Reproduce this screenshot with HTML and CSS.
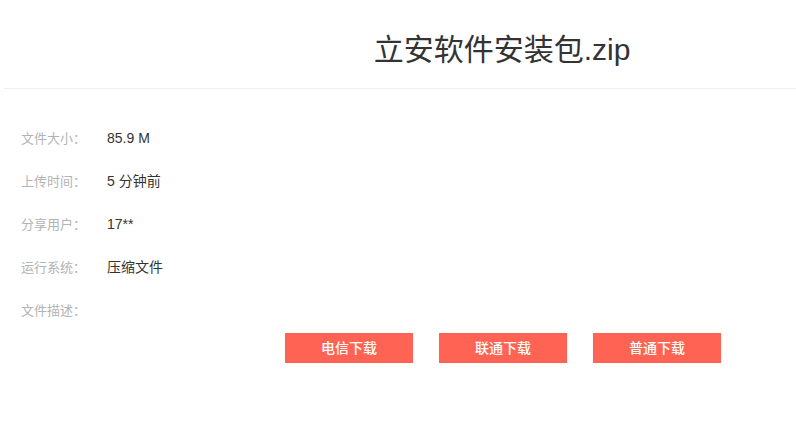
FILE: index.html
```html
<!DOCTYPE html>
<html>
<head>
  <meta charset="UTF-8" />
  <title>立安软件安装包.zip</title>
  <link rel="stylesheet" href="styles.css">
</head>
<body>
  <div class="page">
    <!-- File name -->
    <div class="head">
      <h1 class="title">立安软件安装包.zip</h1>
    </div>

    <!-- File info list -->
    <ul class="info">
      <li class="row"><span class="label">文件大小：</span><span class="value">85.9 M</span></li>
      <li class="row"><span class="label">上传时间：</span><span class="value">5 分钟前</span></li>
      <li class="row"><span class="label">分享用户：</span><span class="value">17**</span></li>
      <li class="row"><span class="label">运行系统：</span><span class="value">压缩文件</span></li>
      <li class="row"><span class="label">文件描述：</span><span class="value"></span></li>
    </ul>

    <!-- Download buttons -->
    <div class="downloads">
      <a class="btn" href="#">电信下载</a>
      <a class="btn" href="#">联通下载</a>
      <a class="btn" href="#">普通下载</a>
    </div>
  </div>
</body>
</html>
```

FILE: styles.css
```css
body {
  margin: 0;
  font-family: "Liberation Sans", "Noto Sans CJK SC", sans-serif;
  background: #fff;
  color: #333;
}

.page {
  width: 796px;
}

/* Title bar */
.head {
  margin-left: 4px;
  padding-left: 204px;
  height: 88px;
  border-bottom: 1px solid #eee;
  text-align: center;
}

.title {
  margin: 0;
  padding-top: 30px;
  font-size: 30px;
  font-weight: normal;
  line-height: 40px;
  color: #333;
}

/* Info rows */
.info {
  list-style: none;
  margin: 0;
  padding: 28px 0 0 21px;
}

.row {
  display: flex;
  height: 43px;
  line-height: 43px;
  font-size: 13px;
}

.label {
  width: 86px;
  color: #b3b3b3;
}

.value {
  font-size: 14px;
  color: #333;
}

/* Buttons */
.downloads {
  display: flex;
  gap: 26px;
  margin-top: 1px;
  padding-left: 285px;
}

.btn {
  display: block;
  width: 128px;
  height: 30px;
  line-height: 30px;
  text-align: center;
  font-size: 14px;
  font-weight: 500;
  color: #fff;
  text-decoration: none;
  background: #ff6353;
  box-shadow: 0 1px 1px rgba(0, 0, 0, 0.12);
}
```
